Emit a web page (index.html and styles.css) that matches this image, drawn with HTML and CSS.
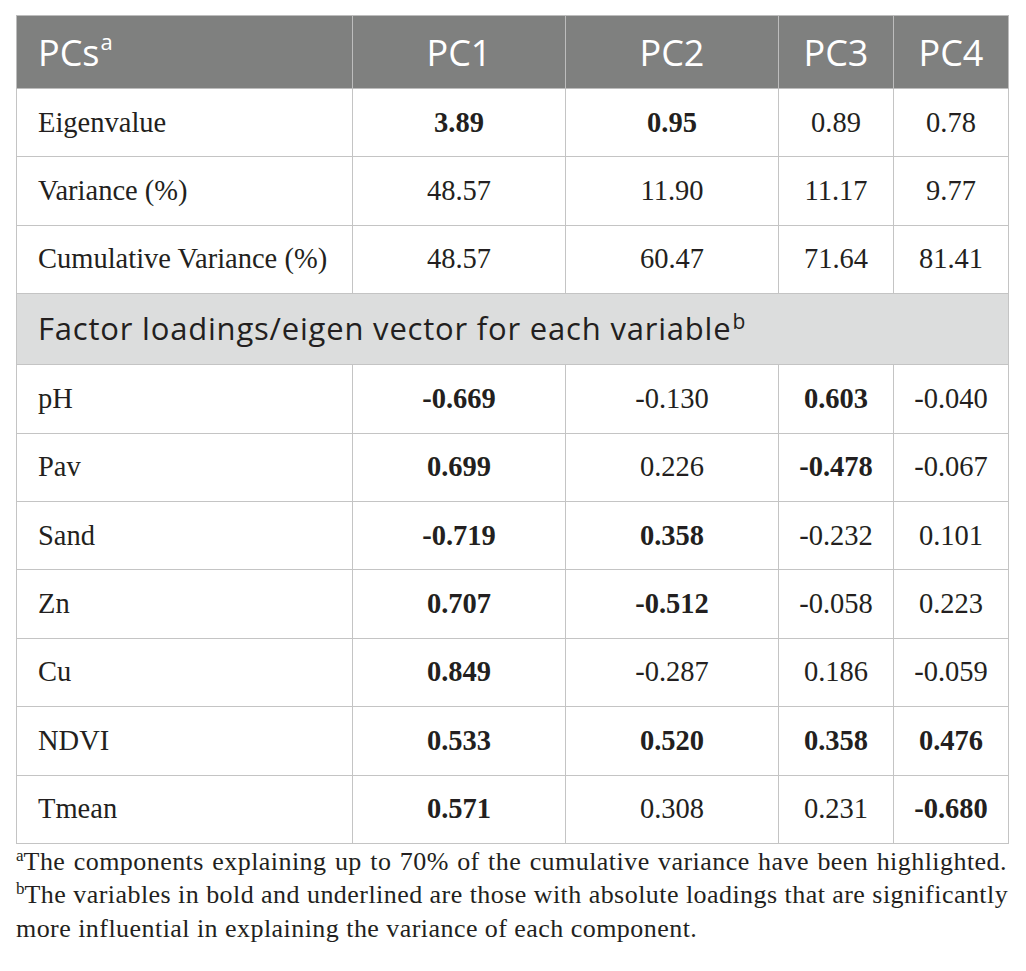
FILE: index.html
```html
<!DOCTYPE html>
<html lang="en">
<head>
  <meta charset="UTF-8" />
  <title>Principal components</title>
  <link rel="stylesheet" href="styles.css">
</head>
<body>
  <div class="wrap">
    <table class="pca">
      <colgroup>
        <col class="c-name"><col class="c-wide"><col class="c-wide"><col class="c-narrow"><col class="c-narrow">
      </colgroup>
      <thead>
        <tr>
          <th class="first">PCs<sup>a</sup></th>
          <th>PC1</th>
          <th>PC2</th>
          <th>PC3</th>
          <th>PC4</th>
        </tr>
      </thead>
      <tbody>
        <tr><td>Eigenvalue</td><td><b>3.89</b></td><td><b>0.95</b></td><td>0.89</td><td>0.78</td></tr>
        <tr><td>Variance (%)</td><td>48.57</td><td>11.90</td><td>11.17</td><td>9.77</td></tr>
        <tr><td>Cumulative Variance (%)</td><td>48.57</td><td>60.47</td><td>71.64</td><td>81.41</td></tr>
        <tr class="section"><td colspan="5">Factor loadings/eigen vector for each variable<sup>b</sup></td></tr>
        <tr><td>pH</td><td><b>-0.669</b></td><td>-0.130</td><td><b>0.603</b></td><td>-0.040</td></tr>
        <tr><td>Pav</td><td><b>0.699</b></td><td>0.226</td><td><b>-0.478</b></td><td>-0.067</td></tr>
        <tr><td>Sand</td><td><b>-0.719</b></td><td><b>0.358</b></td><td>-0.232</td><td>0.101</td></tr>
        <tr><td>Zn</td><td><b>0.707</b></td><td><b>-0.512</b></td><td>-0.058</td><td>0.223</td></tr>
        <tr><td>Cu</td><td><b>0.849</b></td><td>-0.287</td><td>0.186</td><td>-0.059</td></tr>
        <tr><td>NDVI</td><td><b>0.533</b></td><td><b>0.520</b></td><td><b>0.358</b></td><td><b>0.476</b></td></tr>
        <tr><td>Tmean</td><td><b>0.571</b></td><td>0.308</td><td>0.231</td><td><b>-0.680</b></td></tr>
      </tbody>
    </table>

    <!-- footnotes: lines broken as in the printed table -->
    <div class="notes">
      <span class="line full"><sup>a</sup>The components explaining up to 70% of the cumulative variance have been highlighted.</span>
      <span class="line full"><sup>b</sup>The variables in bold and underlined are those with absolute loadings that are significantly</span>
      <span class="line">more influential in explaining the variance of each component.</span>
    </div>
  </div>
</body>
</html>
```

FILE: styles.css
```css
body { margin: 0; padding: 0; background: #fff; }
.wrap { width: 991px; margin: 15px 0 0 16px; }

.pca { width: 991px; border-collapse: collapse; table-layout: fixed; font-family: "Liberation Serif", "Times New Roman", serif; font-size: 28.5px; color: #231f20; }
.pca .c-name { width: 336px; }
.pca .c-wide { width: 213px; }
.pca .c-narrow { width: 115px; }

.pca th { background: #7f807f; color: #fff; font-family: "Open Sans", sans-serif; font-weight: 400; font-size: 36px; height: 72px; padding: 0; text-align: center; border: 1px solid #bdbdbd; }
.pca th.first { text-align: left; padding-left: 21px; }
.pca th sup { font-size: 22px; vertical-align: 16px; line-height: 0; margin-left: 1px; }

.pca td { height: 67.4px; padding: 0; text-align: center; border: 1px solid #c4c4c4; }
.pca td:first-child { text-align: left; padding-left: 21px; }
.pca td b { font-weight: 700; }

.pca .section td { background: #dcdddd; font-family: "Open Sans", sans-serif; font-size: 31px; letter-spacing: 0.8px; height: 68px; padding-bottom: 2px; color: #231f20; }
.pca .section sup { font-size: 21px; letter-spacing: 0; vertical-align: 11px; line-height: 0; margin-left: 1px; }

.notes { margin-top: 1px; font-family: "Liberation Serif", "Times New Roman", serif; font-size: 26px; letter-spacing: 0.45px; line-height: 33.5px; color: #231f20; }
.notes .line { display: block; white-space: nowrap; }
.notes .line.full { text-align: justify; text-align-last: justify; }
.notes sup { font-size: 17px; letter-spacing: 0; vertical-align: 9px; line-height: 0; }
```
